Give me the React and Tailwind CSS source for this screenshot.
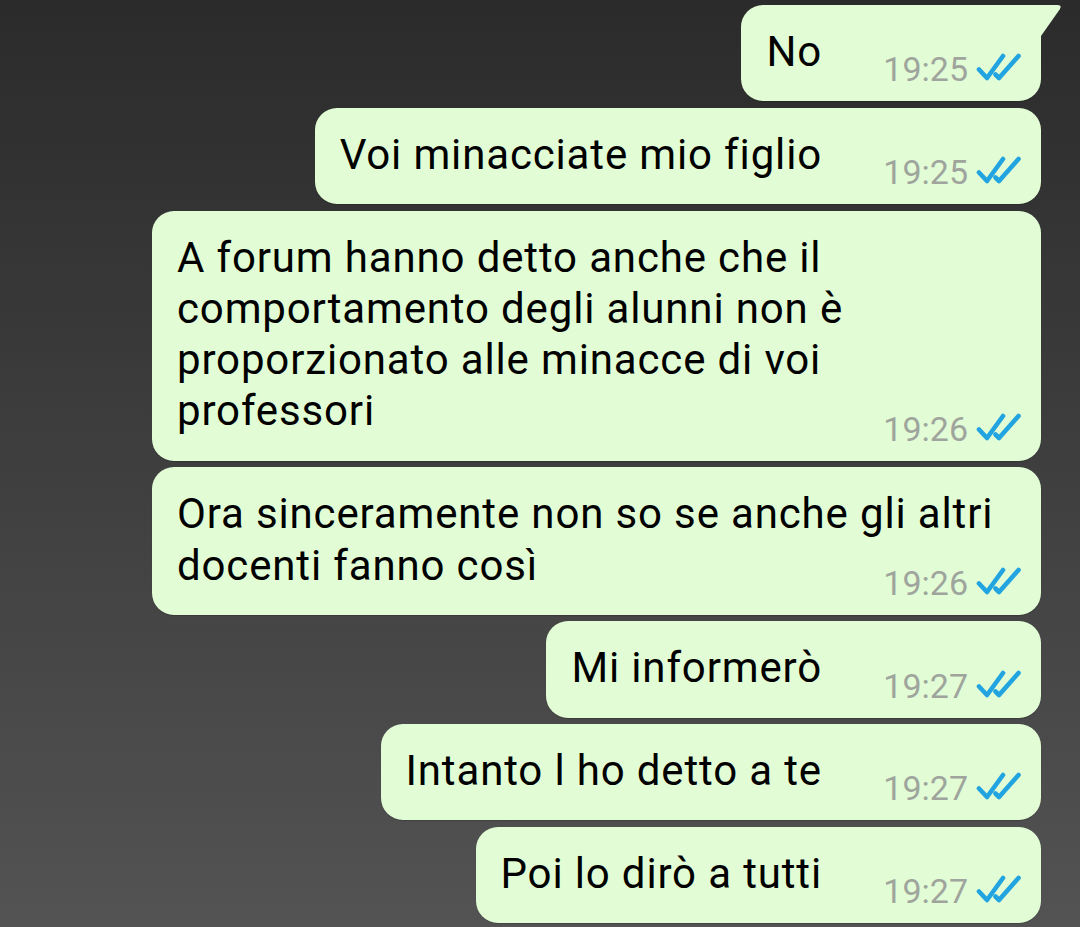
import React from "react";

function Checks() {
  return (
    <svg width="46" height="28" viewBox="0 0 46 28" className="mb-[4px] ml-[8px] shrink-0" fill="none">
      <path d="M3 16.5 L11 25 L27 3" stroke="#22a4e0" strokeWidth="4.6" strokeLinecap="round" strokeLinejoin="round" />
      <path d="M19.5 21.5 L23 25 L42.5 3" stroke="#22a4e0" strokeWidth="4.6" strokeLinecap="round" strokeLinejoin="round" />
    </svg>
  );
}

function Bubble({ lines, time, wide, tail }) {
  return (
    <div
      className={
        "relative bg-[#e2fdd5] rounded-[22px] pt-[21px] pb-[15px] pl-[25px] pr-[19px] flex flex-col shadow-[0_1px_1px_rgba(0,0,0,0.18)] " +
        (wide ? "w-[889px] " : "") +
        (tail ? "rounded-tr-none" : "")
      }
    >
      {tail && (
        <svg
          width="22"
          height="32"
          viewBox="0 0 22 32"
          className="absolute left-full top-0"
        >
          <path d="M0 0 H16 Q21.5 0 18.8 4.2 L0 31 Z" fill="#e2fdd5" />
        </svg>
      )}
      <p className="text-[42px] leading-[51.3px] tracking-[0.85px] text-black whitespace-nowrap">
        {lines.map((l, i) => (
          <React.Fragment key={i}>
            {l}
            {i < lines.length - 1 ? <br /> : <span className="inline-block w-[200px]" />}
          </React.Fragment>
        ))}
      </p>
      <div className="-mt-[25px] flex items-center justify-end">
        <span className="text-[34px] leading-[34px] text-[#9fa59d]">{time}</span>
        <Checks />
      </div>
    </div>
  );
}

export default function App() {
  const msgs = [
    { lines: ["No"], time: "19:25", tail: true },
    { lines: ["Voi minacciate mio figlio"], time: "19:25" },
    {
      lines: [
        "A forum hanno detto anche che il",
        "comportamento degli alunni non è",
        "proporzionato alle minacce di voi",
        "professori",
      ],
      time: "19:26",
      wide: true,
    },
    {
      lines: ["Ora sinceramente non so se anche gli altri", "docenti fanno così"],
      time: "19:26",
      wide: true,
    },
    { lines: ["Mi informerò"], time: "19:27" },
    { lines: ["Intanto l ho detto a te"], time: "19:27" },
    { lines: ["Poi lo dirò a tutti"], time: "19:27" },
  ];
  return (
    <div
      className="w-[1080px] h-[927px] overflow-hidden bg-gradient-to-b from-[#2b2b2b] to-[#535353] flex flex-col items-end gap-[6.5px] pt-[5px] pr-[39px]"
      style={{ fontFamily: "Roboto, 'Noto Sans', sans-serif" }}
    >
      {msgs.map((m, i) => (
        <Bubble key={i} {...m} />
      ))}
    </div>
  );
}
